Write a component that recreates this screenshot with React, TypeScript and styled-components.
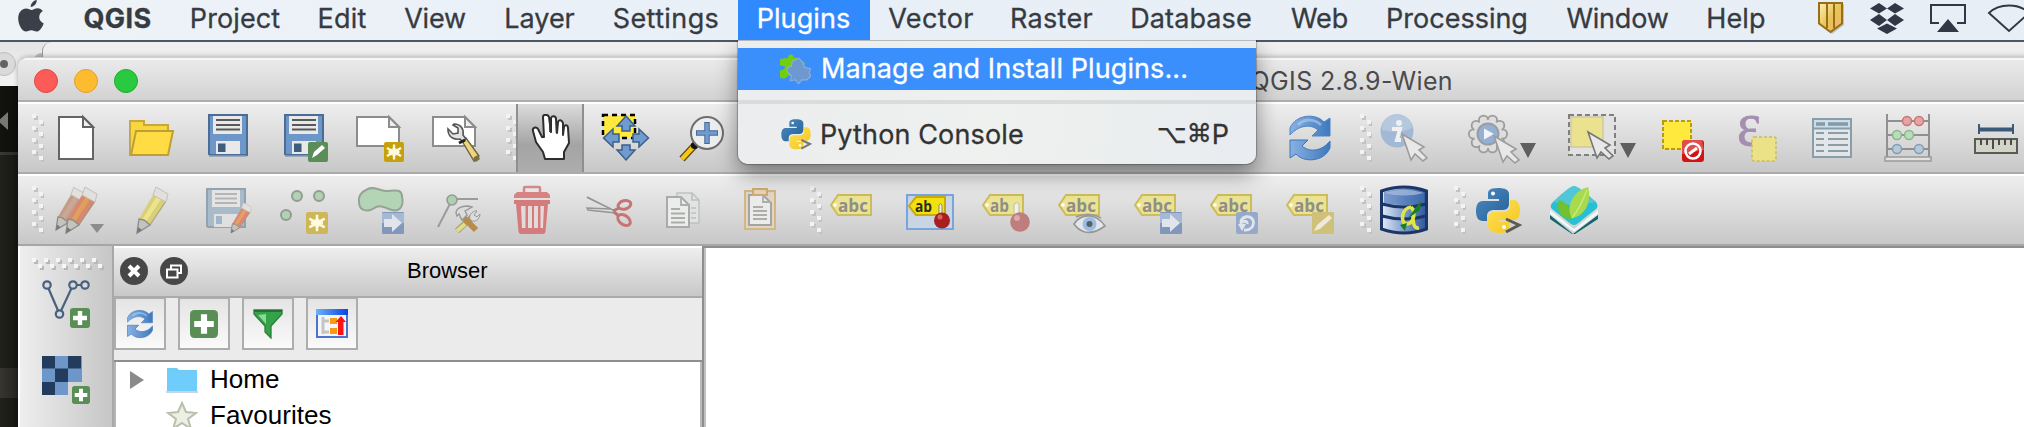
import React from "react";
import styled, { createGlobalStyle } from "styled-components";

const GlobalStyle = createGlobalStyle`
  body { margin: 0; }
  *, *::before, *::after { box-sizing: border-box; }
`;

const UI = `Inter, "Helvetica Neue", sans-serif`;
const HELV = `"Liberation Sans", Helvetica, sans-serif`;

/* ---------- desktop ---------- */

const Desktop = styled.div`
  position: relative;
  width: 2024px;
  height: 427px;
  overflow: hidden;
  background: #1c1d18;
  font-family: ${UI};
`;

const BackTitle = styled.div`
  position: absolute;
  left: 0;
  top: 42px;
  width: 60px;
  height: 44px;
  background: linear-gradient(#e4e4e4, #f2f2f2);
`;

const BackWindow = styled.div`
  position: absolute;
  left: 42px;
  top: 42px;
  width: 1990px;
  height: 40px;
  border-left: 1px solid #9a9a9a;
  border-radius: 9px 0 0 0;
  background: linear-gradient(#f0f0f0, #e3e3e3);
`;

const EditorStrip = styled.div`
  position: absolute;
  left: 0;
  top: 86px;
  width: 18px;
  height: 341px;
  background: linear-gradient(90deg, transparent, rgba(0, 0, 0, 0.3)),
    linear-gradient(#12120e 0 66px, #3a3a36 66px 69px, #20211b 69px 282px, #36352e 282px 312px, #20211b 312px);
`;

const StripArt = styled.svg`
  position: absolute;
  left: 0;
  top: 42px;
  width: 42px;
  height: 100px;
`;

/* ---------- menu bar ---------- */

const MenuBar = styled.div`
  position: relative;
  z-index: 2;
  display: flex;
  height: 42px;
  border-bottom: 2px solid #4b5867;
  background: linear-gradient(90deg, #eef3f7, #e8eff7 40%, #e8eef6);
`;

const AppleSlot = styled.div`
  width: 64px;
  padding-left: 18px;
`;

const MenuTitle = styled.div<{ $w: number; $ls: number; $bold?: boolean; $open?: boolean }>`
  width: ${(p) => p.$w}px;
  height: 40px;
  line-height: 37px;
  padding-right: 1px;
  display: flex;
  justify-content: center;
  font-size: 27px;
  white-space: nowrap;
  letter-spacing: ${(p) => p.$ls}px;
  font-weight: ${(p) => (p.$bold ? 700 : 400)};
  -webkit-text-stroke: 0.3px currentColor;
  color: ${(p) => (p.$open ? "#fff" : "#363b42")};
  background: ${(p) => (p.$open ? "#3089fd" : "transparent")};
`;

const StatusItems = styled.div`
  display: flex;
  margin-left: auto;
  height: 40px;
`;

const menus: { label: string; w: number; ls: number; bold?: boolean; open?: boolean }[] = [
  { label: "QGIS", w: 108, ls: 0.4, bold: true },
  { label: "Project", w: 127, ls: 0.1 },
  { label: "Edit", w: 87, ls: 0.2 },
  { label: "View", w: 99, ls: -0.2 },
  { label: "Layer", w: 110, ls: 0 },
  { label: "Settings", w: 143, ls: 0.4 },
  { label: "Plugins", w: 132, ls: 0.1, open: true },
  { label: "Vector", w: 123, ls: 0.4 },
  { label: "Raster", w: 118, ls: 0.3 },
  { label: "Database", w: 161, ls: 0.1 },
  { label: "Web", w: 96, ls: -0.1 },
  { label: "Processing", w: 179, ls: 0 },
  { label: "Window", w: 142, ls: -0.2 },
  { label: "Help", w: 95, ls: 0.2 },
];

/* ---------- dropdown ---------- */

const Dropdown = styled.div`
  position: absolute;
  z-index: 3;
  left: 738px;
  top: 40px;
  width: 518px;
  height: 124px;
  padding-top: 7px;
  border-top: 1px solid #b4b9be;
  border-radius: 0 0 10px 10px;
  background: linear-gradient(100deg, #ecedee, #eef1ee 50%, #e9ecf0);
  box-shadow: 0 0 1px 1px rgba(0, 0, 0, 0.25), 0 10px 22px rgba(0, 0, 0, 0.42);
  clip-path: inset(0 -60px -60px -60px);
`;

const MenuItem = styled.div<{ $active?: boolean; $ls: number }>`
  display: flex;
  align-items: center;
  height: ${(p) => (p.$active ? 42 : 60)}px;
  padding: 0 27px ${(p) => (p.$active ? 2 : 0)}px 42px;
  font-size: 27px;
  letter-spacing: ${(p) => p.$ls}px;
  white-space: nowrap;
  -webkit-text-stroke: 0.3px currentColor;
  color: ${(p) => (p.$active ? "#fff" : "#333")};
  background: ${(p) => (p.$active ? "#3a8ffc" : "transparent")};
  svg { margin-right: ${(p) => (p.$active ? 10 : 8)}px; flex: none; }
`;

const Divider = styled.div`
  height: 4px;
  margin-top: 10px;
  background: #dadbdc;
`;

const Shortcut = styled.span`
  display: flex;
  align-items: center;
  margin-left: auto;
  letter-spacing: 0;
`;

const KeySymbol = styled.span<{ $size: number }>`
  font-family: "DejaVu Sans", sans-serif;
  font-size: ${(p) => p.$size}px;
  line-height: 30px;
  letter-spacing: 0;
`;

/* ---------- window ---------- */

const Window = styled.div`
  position: absolute;
  left: 18px;
  top: 57px;
  width: 2006px;
  height: 370px;
  display: flex;
  flex-direction: column;
  border-radius: 10px 0 0 0;
  overflow: hidden;
  background: #fff;
  border-top: 1px solid #cfcfcf;
`;

const WindowShadow = styled.div`
  position: absolute;
  left: 18px;
  top: 57px;
  width: 2020px;
  height: 380px;
  border-radius: 10px 0 0 0;
  box-shadow: 0 0 5px rgba(0, 0, 0, 0.3);
`;

const TitleBar = styled.div`
  display: flex;
  align-items: center;
  height: 44px;
  flex: none;
  padding: 2px 571px 0 16px;
  border-top: 2px solid #f7f7f7;
  border-bottom: 2px solid #adadad;
  background: linear-gradient(#eaeaea, #d2d2d2);
`;

const Light = styled.span<{ $fill: string; $ring: string }>`
  width: 24px;
  height: 24px;
  margin-right: 16px;
  border-radius: 50%;
  border: 1.5px solid ${(p) => p.$ring};
  background: ${(p) => p.$fill};
`;

const TitleText = styled.span`
  margin-left: auto;
  font-size: 25px;
  letter-spacing: 0.35px;
  color: #4a4a4c;
`;

const Toolbar = styled.div<{ $last?: boolean }>`
  display: flex;
  align-items: center;
  flex: none;
  height: 72px;
  padding-left: 14px;
  border-top: 2px solid #fff;
  border-bottom: 2px solid ${(p) => (p.$last ? "#a6a6a6" : "#ababab")};
  background: linear-gradient(#eeeeee, #c8c8c8);
`;

const Tool = styled.div<{ $ml?: number }>`
  width: 48px;
  height: 48px;
  flex: none;
  margin-left: ${(p) => p.$ml ?? 28}px;
  svg { display: block; overflow: visible; }
`;

const PressedTool = styled.div`
  display: flex;
  align-items: center;
  justify-content: center;
  width: 68px;
  height: 68px;
  flex: none;
  margin-left: -2px;
  border: solid #8f8f8f;
  border-width: 0 2px;
  background: linear-gradient(#dcdcdc, #a4a4a4 60%, #adadad);
`;

const Grip = styled.svg<{ $ml?: number }>`
  display: block;
  flex: none;
  margin-left: ${(p) => p.$ml ?? 0}px;
`;

const Caret = styled.span<{ $ml: number; $mr: number; $dim?: boolean; $w: number }>`
  flex: none;
  align-self: flex-end;
  margin: 0 ${(p) => p.$mr}px ${(p) => (p.$dim ? 11 : 14)}px ${(p) => p.$ml}px;
  border: solid transparent;
  border-width: ${(p) => (p.$dim ? 9 : 15)}px ${(p) => p.$w / 2}px 0;
  border-top-color: ${(p) => (p.$dim ? "#8c8c8c" : "#5e5e5e")};
`;

const Body = styled.div`
  display: flex;
  flex: 1;
`;

const SideBar = styled.div`
  width: 96px;
  padding: 12px 0 0 12px;
  border-left: 2px solid #fff;
  border-right: 2px solid #a8a8a8;
  background: linear-gradient(90deg, #eeeeee, #c6c6c6);
`;

const SideTool = styled.div<{ $mt: number }>`
  width: 48px;
  height: 48px;
  margin: ${(p) => p.$mt}px 0 0 10px;
  svg { display: block; overflow: visible; }
`;

const BrowserPanel = styled.div`
  display: flex;
  flex-direction: column;
  width: 588px;
  border-top: 2px solid #fff;
`;

const PanelHeader = styled.div`
  display: flex;
  align-items: center;
  height: 50px;
  flex: none;
  padding: 0 0 3px 6px;
  border-bottom: 2px solid #ababab;
  background: linear-gradient(#eeeeee, #c8c8c8);
  svg { margin-right: 12px; }
`;

const PanelTitle = styled.span`
  font: 22px/26px ${HELV};
  color: #000;
  margin-left: 207px;
`;

const PanelButtons = styled.div`
  display: flex;
  gap: 12px;
  height: 64px;
  flex: none;
  border-bottom: 2px solid #8e8e8e;
  background: #ebebeb;
`;

const PanelButton = styled.div`
  display: flex;
  align-items: center;
  justify-content: center;
  width: 52px;
  height: 52px;
  border: 2px solid #adadad;
  border-top-width: 1px;
  background: linear-gradient(#e4e4e4, #fafafa);
`;

const Tree = styled.div`
  flex: 1;
  overflow: hidden;
  border-left: 2px solid #b5b5b5;
  border-right: 2px solid #b9b9b9;
  background: #fff;
`;

const TreeRow = styled.div`
  display: flex;
  align-items: center;
  height: 36px;
  padding-left: 14px;
  font: 26px/34px ${HELV};
  color: #000;
`;

const TreeLabel = styled.span`
  height: 36px;
`;

const Disclosure = styled.span<{ $shown?: boolean }>`
  width: 14px;
  margin-right: 22px;
  border: solid transparent;
  border-width: 9px 0 9px 14px;
  border-left-color: ${(p) => (p.$shown ? "#8a8a8a" : "transparent")};
`;

const TreeIcon = styled.svg`
  margin-right: 12px;
  flex: none;
`;

const Canvas = styled.div`
  flex: 1;
  border-top: 2px solid #8e8e8e;
  border-left: 2px solid #8e8e8e;
  background: #fff;
  box-shadow: inset 2px 0 #c0c0c0;
`;

/* ---------- icons ---------- */

const Svg = ({ children, size = 48, box = 48, opacity }: { children: React.ReactNode; size?: number; box?: number; opacity?: number }) => (
  <svg width={size} height={size} viewBox={`0 0 ${box} ${box}`} opacity={opacity}>{children}</svg>
);

const gripDots = [0, 1, 2, 3].flatMap((i) => [[0, i * 12], [7, i * 12 + 6]]);
const ToolbarGrip = ({ ml }: { ml?: number }) => (
  <Grip $ml={ml} width="12" height="48">
    {gripDots.map(([x, y]) => (
      <g key={`${x}-${y}`}>
        <rect x={x + 2} y={y + 2} width="4" height="4" fill="#c2c2c2" />
        <rect x={x} y={y} width="4" height="4" fill="#f3f3f3" />
      </g>
    ))}
  </Grip>
);

const SideGrip = () => (
  <Grip width="76" height="14">
    {Array.from({ length: 12 }, (_, i) => {
      const y = i % 2 ? 6 : 0;
      return (
        <g key={i}>
          <rect x={i * 6 + 2} y={y + 2} width="4" height="4" fill="#b8b8b8" />
          <rect x={i * 6} y={y} width="4" height="4" fill="#f6f6f6" />
        </g>
      );
    })}
  </Grip>
);

const Apple = () => (
  <svg width="26" height="32" viewBox="0 0 26 32" fill="#3b4048">
    <path d="M18.700 0c.3 3.300-2.700 6.900-6 6.900C12.400 3.700 15.500.4 18.700 0Z" />
    <path d="M24.800 11.100c-5.400 3.500-4.400 10.200.9 12.300-1.200 3.400-4 8.100-7 8.100-2.100 0-2.900-1.300-5.400-1.300s-3.400 1.300-5.300 1.300C4.400 31.500.2 25 .2 18.200c0-6 3.800-9.800 8-9.800 2.400 0 3.800 1.500 5.500 1.500 1.600 0 3.300-1.700 6.100-1.700 1.800 0 3.900 1 5 2.900Z" />
  </svg>
);

const Tray = () => (
  <svg width="207" height="40" viewBox="0 0 207 40">
    <defs>
      <linearGradient id="gold" x1="0" y1="0" x2="1" y2="1">
        <stop offset="0" stopColor="#fdf0b8" /><stop offset=".5" stopColor="#e8c455" /><stop offset="1" stopColor="#f0b476" />
      </linearGradient>
    </defs>
    <path d="M3 4H27V25L15 34L3 25Z" fill="#00000030" />
    <path d="M2 3H25V23.500L13.500 32L2 23.500Z" fill="url(#gold)" stroke="#996f16" strokeWidth="2" />
    <path d="M10 3V28M17 3V28" stroke="#996f16" strokeWidth="2" />
    <g fill="#2f3844">
      <path d="M62 3L70 8.500L62 13.500L53 8.500ZM78 3L87 8.500L78 13.500L70 8.500ZM62 14L70 20L62 26L53 20ZM78 14L87 20L78 26L70 20ZM70 23.500L80 28.500L70 34L60 28.500Z" />
      <path d="M131 19L142 32H120Z" />
    </g>
    <path d="M122 23H114V5H148V23H140" fill="none" stroke="#2f3844" strokeWidth="2" />
    <path d="M172 13C182 3 202 3 212 13L192 31Z" fill="none" stroke="#2f3844" strokeWidth="2" />
  </svg>
);

const Spark = ({ x, y, s = 20, fill = "#c6a10b" }: { x: number; y: number; s?: number; fill?: string }) => (
  <g transform={`translate(${x} ${y}) scale(${s / 20})`}>
    <rect width="20" height="20" rx="2" fill={fill} />
    <path d="M10 2.500V17.500M3 6L17 14M17 6L3 14M4.500 10H15.500" stroke="#fffbe0" strokeWidth="2.300" />
    <circle cx="10" cy="10" r="4" fill="#fffbe0" opacity=".75" />
  </g>
);

const PlusBadge = ({ x, y, s }: { x: number; y: number; s: number }) => (
  <g transform={`translate(${x} ${y}) scale(${s / 20})`}>
    <rect width="20" height="20" rx="3" fill="#598e55" />
    <path d="M10 3V17M3 10H17" stroke="#fff" strokeWidth="4.400" />
  </g>
);

const ArrowBadge = () => (
  <g>
    <rect x="26" y="26" width="22" height="22" rx="1" fill="#8197bc" />
    <path d="M26 27H48V37H26Z" fill="#a5b8d4" />
    <path d="M28 33H36V28L46 37L36 46V41H28Z" fill="#e0e5ec" />
  </g>
);

const Cursor = ({ x, y, stroke = "#8b8b8b" }: { x: number; y: number; stroke?: string }) => (
  <path transform={`translate(${x} ${y})`} d="M0 0L22 13L17 16L25 24L21 27L13 20L9 26Z" fill="#e8e8e8" stroke={stroke} strokeWidth="1.600" />
);

const NewPage = () => (
  <Svg>
    <path d="M7 3H31L41 13V45H7Z" fill="#fff" stroke="#646464" strokeWidth="2" />
    <path d="M31 3V13H41Z" fill="#eee" stroke="#646464" strokeWidth="2" />
  </Svg>
);

const OpenFolder = () => (
  <Svg>
    <path d="M2 41V7H16V11H40V17L34 41Z" fill="#f7d63e" stroke="#c8a83e" strokeWidth="2" />
    <path d="M8 17H45L40 41H3Z" fill="#ffdb44" stroke="#bd9f35" strokeWidth="2" />
  </Svg>
);

const DiskShape = () => (
  <>
    <path d="M5 1H43V41H6L5 40Z" fill="#6c97c8" stroke="#4b6d93" strokeWidth="2" />
    <rect x="9" y="2" width="29" height="18" fill="#e9e9e9" />
    <path d="M12 6H36M12 11H36M12 15.500H36" stroke="#595959" strokeWidth="2" />
    <rect x="12" y="27" width="24" height="13" fill="#e9e9e9" />
    <rect x="14" y="29.500" width="7.500" height="8.500" fill="#3e5c7d" />
    <path d="M5 42H43" stroke="#8a9db2" strokeWidth="1.500" />
  </>
);

const SaveAs = () => (
  <Svg>
    <DiskShape />
    <rect x="28" y="28" width="20" height="20" rx="2" fill="#5a8d58" />
    <path d="M32 44L34 38L42 31L45 34L37 41Z" fill="#fff" />
  </Svg>
);

const Landscape = () => (
  <>
    <path d="M1 3H33L43 13V32H1Z" fill="#fff" stroke="#8c8c8c" strokeWidth="2" />
    <path d="M33 3V13H43Z" fill="#eee" stroke="#8c8c8c" strokeWidth="2" />
  </>
);

const Wrench = () => (
  <Svg>
    <Landscape />
    <path d="M30 27L34 24L47 42L42 47Z" fill="#ecd67c" stroke="#6f6544" strokeWidth="1.400" />
    <path d="M42 43L46 41L48 45L44 48L41 46Z" fill="#7e6f45" />
    <path d="M16 17C17 24 23 26 28 25L31 28L34 25L31 21C32 15 29 10 22 10L21 11L26 14V19L21 20L16 15Z" fill="#e2e2e2" stroke="#555" strokeWidth="1.600" />
    <path d="M27 29L33 26" stroke="#222" strokeWidth="3" />
  </Svg>
);

const Hand = () => (
  <Svg>
    <path
      d="M19 45L17 38L10 28L7 17C6 14 10 12 12 15L16 23H18L17 3C17 0 22 0 23 3L25 18L25 4C26 1 30 2 30 5L31 19L32 8C33 5 36 6 37 9V21L38 13C39 10 42 11 42 14L43 29L38 38V45Z"
      fill="#fff" stroke="#2d2d2d" strokeWidth="2" strokeLinejoin="round"
    />
    <path d="M24 7V18M30.500 8V19M37 11V21" stroke="#333" strokeWidth="1.600" />
  </Svg>
);

const PanSelection = () => (
  <Svg>
    <rect x="1" y="1" width="32" height="23" fill="#ffe93d" stroke="#000" strokeWidth="2.500" strokeDasharray="5 4" />
    <g fill="#6f9bce" stroke="#3d5f8a" strokeWidth="1.500">
      <path d="M24 2L33 12H28V17H20V12H15Z" />
      <path d="M24 46L33 36H28V31H20V36H15Z" />
      <path d="M1.500 24L11 15V20H17V28H11V33Z" />
      <path d="M46.500 24L37 15V20H31V28H37V33Z" />
    </g>
  </Svg>
);

const ZoomIn = () => (
  <Svg>
    <path d="M17 31L4 45" stroke="#5b4b1c" strokeWidth="7" />
    <path d="M16 32L4 45" stroke="#f9c80e" strokeWidth="4.500" />
    <circle cx="16.500" cy="31.500" r="3.600" fill="#111" />
    <circle cx="29" cy="19" r="16" fill="#eceded" stroke="#6d6d6d" strokeWidth="2" />
    <path d="M29 8V30M18 19H40" stroke="#456a9a" strokeWidth="5.500" />
    <path d="M29 9V29M19 19H39" stroke="#6f9bce" strokeWidth="3.500" />
  </Svg>
);

const Refresh = ({ size }: { size?: number }) => (
  <Svg size={size}>
    <defs>
      <linearGradient id="rf" x1="0" x2="1"><stop offset="0" stopColor="#8ab1e2" /><stop offset="1" stopColor="#3d79bd" /></linearGradient>
    </defs>
    <path d="M4 21V14C10 0 30 -1 38 8L44 4V22H26L32 16C24 9 12 12 4 21Z" fill="url(#rf)" stroke="#4f83c2" />
    <path d="M44 27V34C38 48 18 49 10 40L4 44V26H22L16 32C24 39 36 37 44 27Z" fill="url(#rf)" stroke="#3f76b8" />
    <path d="M12 11C19 4 29 5 35 11" fill="none" stroke="#b4cdec" strokeWidth="3" opacity=".6" />
  </Svg>
);

const Identify = () => (
  <Svg>
    <circle cx="17" cy="17" r="16.500" fill="#a2b9d5" />
    <path d="M2 16A15 15 0 0 1 32 14Q20 20 2 16Z" fill="#b5c8dd" />
    <circle cx="19" cy="9" r="3" fill="#f0f0f0" />
    <path d="M12 15H20L17 26H21" fill="none" stroke="#f0f0f0" strokeWidth="4" />
    <Cursor x={22} y={20} stroke="#9c9c9c" />
  </Svg>
);

const Action = () => (
  <Svg>
    {Array.from({ length: 10 }, (_, i) => {
      const a = (i * Math.PI) / 5;
      return <circle key={i} cx={20 + 14.500 * Math.cos(a)} cy={20 + 14.500 * Math.sin(a)} r="4.600" fill="#dedede" stroke="#9c9c9c" strokeWidth="1.800" />;
    })}
    <circle cx="20" cy="20" r="14" fill="#dedede" />
    <circle cx="20" cy="20" r="10.500" fill="#93b1d5" stroke="#9a9da0" strokeWidth="2" />
    <path d="M16 14.500L26 20L16 25.500Z" fill="#f3f3f3" />
    <Cursor x={26} y={22} stroke="#9c9c9c" />
  </Svg>
);

const SelectArea = () => (
  <Svg>
    <rect x="1" y="1" width="46" height="40" fill="#e2e2e2" stroke="#7f7f7f" strokeWidth="2" strokeDasharray="5 3" />
    <rect x="3" y="3" width="32" height="30" fill="#ebe290" stroke="#cfc9a2" strokeWidth="1.500" />
    <Cursor x={20} y={18} stroke="#777" />
  </Svg>
);

const Deselect = () => (
  <Svg>
    <rect x="3" y="7" width="28" height="28" fill="#ffe93d" stroke="#b89a13" strokeWidth="2" strokeDasharray="4 2" />
    <rect x="22" y="26" width="22" height="22" rx="3" fill="#d01414" />
    <path d="M24 26H42L44 36L22 40V28Z" fill="#e35b5b" opacity=".8" />
    <circle cx="33" cy="37" r="7.500" fill="none" stroke="#fff" strokeWidth="2.500" />
    <path d="M29 40L37 34" stroke="#fff" strokeWidth="3" />
  </Svg>
);

const Expression = () => (
  <Svg>
    <text x="1" y="31" fontFamily="Liberation Serif, serif" fontSize="62" fill="#a48fb0" stroke="#a48fb0" strokeWidth=".8" textLength="24" lengthAdjust="spacingAndGlyphs">ε</text>
    <rect x="16" y="23" width="24" height="24" rx="2" fill="#ebe187" stroke="#c9bc5e" strokeWidth="1.500" strokeDasharray="3 2" />
  </Svg>
);

const Table = () => (
  <Svg>
    <rect x="5" y="5" width="38" height="38" fill="#e3e6e8" stroke="#8a9dab" strokeWidth="2" />
    <rect x="6" y="6" width="36" height="8" fill="#cbdde8" />
    <path d="M5 14.500H43" stroke="#8a9dab" strokeWidth="2" />
    <path d="M8 10H17M20 10H40" stroke="#8499a8" strokeWidth="3.500" />
    <path d="M8 19H16M20 19H40M8 25H16M20 25H40M8 31H16M20 31H40M8 37H16M20 37H40" stroke="#8e9ca6" strokeWidth="2" />
  </Svg>
);

const Abacus = () => {
  const bead = (x: number, y: number, f: string, s: string) => <circle key={`${x}${y}`} cx={x} cy={y} r="4.500" fill={f} stroke={s} strokeWidth="1.500" />;
  return (
    <Svg>
      <path d="M3 0V43M45 0V43M3 7H45M3 21H45M3 35H45" stroke="#909090" strokeWidth="2" />
      <path d="M1 43H47V47H1Z" fill="#e2e2e2" stroke="#9a9a9a" strokeWidth="1.500" />
      {bead(23, 7, "#e5a3a3", "#c77676")}{bead(35, 7, "#e5a3a3", "#c77676")}
      {bead(13, 21, "#b9dcb9", "#8db48d")}{bead(25, 21, "#b9dcb9", "#8db48d")}
      {bead(13, 35, "#b4c9dc", "#859cb0")}{bead(35, 35, "#b4c9dc", "#859cb0")}
    </Svg>
  );
};

const Ruler = () => (
  <Svg>
    <path d="M7 10V20M41 10V20" stroke="#3a5a78" strokeWidth="2" />
    <path d="M7 15.500H41" stroke="#3a5a78" strokeWidth="4" />
    <rect x="3" y="25" width="42" height="14" fill="#d2d4c8" stroke="#595b55" strokeWidth="2" />
    <path d="M9 25V31M15 25V31M21 25V35M27 25V31M33 25V31M39 25V31" stroke="#4b4b4b" strokeWidth="2" />
  </Svg>
);

const Pencil = ({ x, y, body, light, k = 1 }: { x: number; y: number; body: string; light: string; k?: number }) => (
  <g transform={`translate(${x} ${y}) scale(${k})`}>
    <path d="M0 0L2 -14L16 -38L29 -31L13 -8Z" fill={body} />
    <path d="M5 -13L20 -37L24 -34L9 -11Z" fill={light} />
    <path d="M13 -8L29 -32" stroke="#9b8d84" strokeWidth="1.200" opacity=".7" />
    <path d="M0 0L2 -14L7 -13L13 -8Z" fill="#c6c2bc" stroke="#8d8d8d" strokeWidth="1.400" />
    <path d="M0 0L1 -6L5 -3Z" fill="#777" />
    <path d="M16 -38L19 -46L31 -39L29 -31Z" fill="#e2dfdd" stroke="#c2bfbd" />
  </g>
);

const Pencils = () => (
  <Svg>
    <Pencil x={4} y={44} body="#c39c8a" light="#cba896" k={0.93} />
    <Pencil x={14} y={47} body="#d58a70" light="#e09f5c" />
  </Svg>
);

const EditPencil = () => (
  <Svg><Pencil x={9} y={47} body="#d9cf78" light="#ebe48c" /></Svg>
);

const SaveEdits = () => (
  <Svg>
    <g transform="translate(-2 2)">
      <path d="M5 1H43V39H6L5 38Z" fill="#a9bac8" stroke="#92a3b0" strokeWidth="2" />
      <rect x="10" y="2" width="28" height="17" fill="#e4e4e4" />
      <path d="M13 6H35M13 10.500H35M13 15H35" stroke="#b5b5b5" strokeWidth="1.800" />
      <rect x="12" y="26" width="24" height="13" fill="#e0e0e0" />
      <rect x="14" y="28" width="6" height="8" fill="#9fb6cc" />
    </g>
    <Pencil x={27} y={47} body="#da8a72" light="#e3a068" k={0.66} />
  </Svg>
);

const AddPoints = () => (
  <Svg>
    {[[17, 10], [39, 10], [6, 29]].map(([x, y]) => <circle key={x} cx={x} cy={y} r="5" fill="#b0d2b1" stroke="#939c93" strokeWidth="2" />)}
    <Spark x={26} y={26} s={22} fill="#cdb758" />
  </Svg>
);

const MoveFeature = () => (
  <Svg>
    <path d="M10 4C16 -1 25 5 30 5C37 5 45 2 46 10C48 20 44 26 36 24C30 23 26 18 20 21C12 27 3 25 3 16C2 11 5 6 10 4Z" fill="#b4d5b5" stroke="#96a296" strokeWidth="2" />
    <ArrowBadge />
  </Svg>
);

const NodeTool = () => (
  <Svg>
    <path d="M20 13H46M20 14L6 41" stroke="#9b9b9b" strokeWidth="2" />
    <circle cx="20" cy="14" r="5" fill="#afd0b0" stroke="#929c93" strokeWidth="1.600" />
    <path d="M25 45L40 31" stroke="#a3a171" strokeWidth="6" /><path d="M25 45L33 38" stroke="#e0dc88" strokeWidth="4" />
    <path d="M38 33C36 28 43 24 45 25L42 29L45 31L48 28C48 34 42 36 40 35Z" fill="#ddd" stroke="#999" />
    <path d="M30 30L44 44" stroke="#b98b4b" strokeWidth="6" />
    <path d="M25 30C22 24 27 20 36 20L40 21L33 25L35 29L30 34L27 28Z" fill="#dcdcdc" stroke="#999" strokeWidth="1.400" />
  </Svg>
);

const Trash = () => (
  <Svg>
    <path d="M16 7V2Q16 1 17 1H31Q32 1 32 2V7" fill="none" stroke="#d68787" strokeWidth="2.500" />
    <path d="M9 6H39L42 9V12H6V9Z" fill="#d88383" />
    <path d="M6 14H42V18H40L37.500 46Q37 48 35 48H13Q11 48 10.500 46L8 18H6Z" fill="#d47c7c" />
    <path d="M13 20H17.500V42H14ZM20 20H24V42H20ZM26 20H30V42H26ZM32.500 20H36L35 42H32.500Z" fill="#e4dada" />
  </Svg>
);

const Scissors = () => (
  <Svg>
    <path d="M3 11L29 24L32 27L4 24L3 22L27 23L4 12Z" fill="#ddd" stroke="#959595" strokeWidth="1.500" />
    <ellipse cx="40.500" cy="19" rx="6.500" ry="4.200" transform="rotate(-15 40 19)" fill="none" stroke="#c77474" strokeWidth="3" />
    <ellipse cx="40" cy="34" rx="7" ry="4.500" transform="rotate(35 40 34)" fill="none" stroke="#c77474" strokeWidth="3" />
    <path d="M29 25L35 22M30 26L35 30" stroke="#bb7777" strokeWidth="3" />
  </Svg>
);

const Copy = () => (
  <Svg>
    <path d="M17 7H32L39 14V37H17Z" fill="#e1e3e2" stroke="#bfc0c0" strokeWidth="1.500" />
    <path d="M32 7V14H39M31 22H36M31 27H36M31 32H36" fill="none" stroke="#bfc0c0" strokeWidth="1.700" />
    <path d="M7 11H21L29 19V41H7Z" fill="#ebedeb" stroke="#a9aaaa" strokeWidth="2" />
    <path d="M21 11V19H29M11 23H20M11 27.500H25M11 32H25M11 36.500H25" fill="none" stroke="#abacac" strokeWidth="1.800" />
  </Svg>
);

const Paste = () => (
  <Svg>
    <rect x="9" y="5" width="30" height="38" fill="#e4d5c2" stroke="#d3b686" strokeWidth="2" />
    <path d="M13 9H27L35 17V39H13Z" fill="#ebecea" stroke="#a3a4a4" strokeWidth="2" />
    <path d="M27 10V16H35M17 21H27M17 25H31M17 29H31M17 33H31" fill="none" stroke="#adadad" strokeWidth="1.800" />
    <rect x="17" y="3" width="14" height="6" fill="#e6d5bb" stroke="#cfac72" strokeWidth="2" />
  </Svg>
);

const Tag = ({ text = "abc" }: { text?: string }) => (
  <>
    <path d="M1 19L8 9H41V29H8Z" fill="#ebe394" stroke="#cdbd58" strokeWidth="2" />
    <circle cx="5" cy="19" r="1.800" fill="#fff" />
    <text x="8" y="25.500" fontFamily="Open Sans, sans-serif" fontWeight="700" fontSize="17.500" fill="#8f8f85" textLength={text === "abc" ? 30 : 19} lengthAdjust="spacingAndGlyphs">{text}</text>
  </>
);

const Pinned = () => (
  <Svg>
    <rect x="1" y="9" width="46" height="34" fill="#cad5e4" stroke="#79a5de" strokeWidth="2" />
    <path d="M3 20L10 11H39V29H10Z" fill="#f3e011" stroke="#c9aa07" strokeWidth="2" />
    <text x="9" y="25.500" fontFamily="Open Sans, sans-serif" fontWeight="700" fontSize="16" fill="#2e2c12" textLength="17" lengthAdjust="spacingAndGlyphs">ab</text>
    <path d="M33 30V19Q34 16 36 19V30" fill="#eee" stroke="#8d8d6a" />
    <circle cx="36" cy="34.500" r="8" fill="#a81f1f" /><circle cx="34" cy="31" r="2.500" fill="#da6565" />
  </Svg>
);

const PinLabel = () => (
  <Svg>
    <Tag text="ab" />
    <path d="M32 28V18Q35 15 37 18V28" fill="#f0f0ea" stroke="#c0bca0" />
    <circle cx="38" cy="36" r="9.800" fill="#c07d7d" /><circle cx="35" cy="32" r="3" fill="#dda9a9" />
  </Svg>
);

const ShowLabel = () => (
  <Svg>
    <Tag />
    <path d="M16 38Q22 29 32 30Q41 31 47 40Q36 48 27 46Q20 44 16 38Z" fill="#e3e6ea" stroke="#969696" strokeWidth="1.700" />
    <path d="M18 31Q30 25 43 32" fill="none" stroke="#999" strokeWidth="1.600" />
    <circle cx="31.500" cy="38" r="7" fill="#9cbce0" /><circle cx="31.500" cy="38" r="3" fill="#56616c" />
  </Svg>
);

const MoveLabel = () => <Svg><Tag /><ArrowBadge /></Svg>;

const RotateLabel = () => (
  <Svg>
    <Tag />
    <rect x="26" y="26" width="22" height="22" rx="2" fill="#96a9c9" />
    <path d="M34 44C40 45 45 40 43 34C40 29 33 30 31 35V40M37 38C38 35 34 34 33 37" fill="none" stroke="#dfe5ed" strokeWidth="2.800" />
    <path d="M28 38H36L32 45Z" fill="#dfe5ed" />
  </Svg>
);

const ChangeLabel = () => (
  <Svg>
    <Tag />
    <rect x="26" y="26" width="22" height="22" rx="1" fill="#cfc07a" />
    <path d="M28 45L31 39L43 29L46 32L34 43Z" fill="#eeeadb" />
  </Svg>
);

const Database = () => (
  <Svg>
    <defs>
      <linearGradient id="db" x1="0" x2="1">
        <stop offset="0" stopColor="#e3ebf7" /><stop offset=".5" stopColor="#7c9ccd" /><stop offset="1" stopColor="#2f5599" />
      </linearGradient>
    </defs>
    <path d="M1.500 5Q24 -3 46.500 5V43Q24 51 1.500 43Z" fill="url(#db)" stroke="#1b3566" strokeWidth="3" />
    <path d="M4 6Q24 0 44 6V17Q24 21 4 17Z" fill="#4470b4" opacity=".6" />
    <path d="M4 7Q24 0 44 7Q24 12 4 7Z" fill="#a9bfe0" opacity=".7" />
    <path d="M2 18Q24 24 46 18M2 30Q24 36 46 30" fill="none" stroke="#1b3566" strokeWidth="3" />
    <path d="M31 21C21 22 20 38 27 38C34 37 36 26 31 21M34 24C32 34 33 43 39 42" fill="none" stroke="#dfe546" strokeWidth="3.600" />
    <path d="M20 39L27 37L25 45ZM27 33L41 15L40 24Z" fill="#16811f" />
  </Svg>
);

const PythonMark = ({ size, dim }: { size?: number; dim?: boolean }) => (
  <Svg size={size}>
    <defs>
      <linearGradient id="pb" x1="0" y1="0" x2="1" y2="1"><stop offset="0" stopColor="#4b8cc4" /><stop offset="1" stopColor="#265f94" /></linearGradient>
      <linearGradient id="py" x1="0" y1="0" x2="1" y2="1"><stop offset="0" stopColor="#ffe159" /><stop offset="1" stopColor="#f3c51d" /></linearGradient>
    </defs>
    <path d="M24 2C15 2 14 5 14 8V13H25V15H9C4 15 2 19 2 25C2 31 4 35 9 35H13V30C13 26 16 24 20 24H29C33 24 35 21 35 18V8C35 4 31 2 24 2Z" fill="url(#pb)" />
    <circle cx="19" cy="7.500" r="2" fill="#fff" />
    <path d="M36 14V20C36 24 33 26 29 26H20C16 26 14 29 14 32V40C14 44 18 47 25 47C31 47 35 45 35 41V36H25V34H40C44 34 46 30 46 24C46 18 43 14 40 14Z" fill="url(#py)" />
    <circle cx="30" cy="41" r="2" fill="#fff" />
    <path d="M32 33L45 39L32 46" fill="none" stroke={dim ? "#777" : "#5b5b52"} strokeWidth="3" />
  </Svg>
);

const Leaf = () => (
  <Svg>
    <path d="M0 29L23 48L48 29V33L25 48H22L0 33Z" fill="#13656d" />
    <path d="M0 24L24 43L48 24V28L24 46L0 28Z" fill="#eefafa" />
    <path d="M3 16Q20 0 24 0T46 16Q49 20 46 23L27 38Q24 40 21 38L2 23Q-1 20 3 16Z" fill="#27bfd2" />
    <path d="M3 16Q20 0 24 0T46 16L24 20Z" fill="#62cbd8" opacity=".7" />
    <path d="M9 14C6 24 10 33 21 33C23 24 17 16 9 14Z" fill="#72c02d" />
    <path d="M38 1C23 5 15 21 22 32C35 30 42 16 38 1Z" fill="#a7da4e" />
    <path d="M37 4Q30 22 22 32" fill="none" stroke="#c5ec74" strokeWidth="1.500" />
  </Svg>
);

const Puzzle = () => (
  <Svg size={31} box={30}>
    <path d="M0 6L4 5L8 5C7 1 13 0 13 4L17 5L16 10L24 9L23 14L12 22L7 22Q6 26 0 24V17Q5 16 5 13L0 12Z" fill="#71cf10" />
    <path d="M12 8L18 5L22 9L24 14L30 15L28 19L30 22L26 26L21 26L18 30L15 26L10 27L11 22L7 18L7 14L11 13Z" fill="#6d98d0" stroke="#8fb0dc" />
  </Svg>
);

const VectorLayer = () => (
  <Svg>
    <path d="M5 5L17.500 34L31 5H43" fill="none" stroke="#48617d" strokeWidth="2.200" />
    {[[5, 5], [17.500, 34], [31, 5], [43, 5]].map(([x, y]) => <circle key={x} cx={x} cy={y} r="3.700" fill="#d6dade" stroke="#48617d" strokeWidth="2.200" />)}
    <PlusBadge x={28} y={28} s={20} />
  </Svg>
);

const RasterLayer = () => (
  <Svg>
    <rect width="40" height="26" fill="#6c97c8" /><rect y="26" width="26" height="13" fill="#6c97c8" />
    <path d="M0 0H13V12.500H0ZM26 0H39V12.500H26ZM13 12.500H26V26H13ZM0 26H13V39H0Z" fill="#233c5d" />
    <PlusBadge x={30} y={30} s={18} />
  </Svg>
);

const CloseDot = () => (
  <Svg size={28} box={28}>
    <circle cx="14" cy="14" r="14" fill="#474747" />
    <path d="M9 9L19 19M19 9L9 19" stroke="#fff" strokeWidth="4" />
  </Svg>
);

const FloatDot = () => (
  <Svg size={28} box={28}>
    <circle cx="14" cy="14" r="14" fill="#474747" />
    <path d="M11 12V8.500H21V16H18M7 12.500H17.500V20.500H7Z" fill="none" stroke="#fff" strokeWidth="2" />
  </Svg>
);

const Funnel = () => (
  <Svg size={30} box={30}>
    <path d="M1 1H29V5L18 17V29L12 23V17L1 5Z" fill="#35a24a" stroke="#2c7d3c" strokeWidth="1.300" />
    <path d="M5 6L13 15V5Z" fill="#86dc91" />
    <path d="M1 2H29" stroke="#276f35" strokeWidth="2" />
  </Svg>
);

const Collapse = () => (
  <Svg size={32} box={32}>
    <defs><linearGradient id="cw" x1="0" x2="1"><stop offset="0" stopColor="#6cb2f8" /><stop offset="1" stopColor="#0b43e5" /></linearGradient></defs>
    <rect x="1" y="2" width="30" height="27" fill="#f4f6fd" stroke="#4c74cf" strokeWidth="2" />
    <rect x="0" y="1" width="32" height="6" fill="url(#cw)" />
    <path d="M7 9V26M7 13H13M7 24H13" stroke="#c9c4bd" strokeWidth="3" />
    <path d="M14 10H21V16H14ZM14 20H21V26H14Z" fill="#f99a14" />
    <path d="M25 8L30 14H27.500V27H22V14H19.500Z" fill="#fa1414" />
  </Svg>
);

const FolderIcon = () => (
  <TreeIcon width="32" height="26" viewBox="0 0 32 26">
    <path d="M1 1H11L13 3H31V24H1Z" fill="#70cbf5" />
    <path d="M1 6H31V24H1Z" fill="#6fcdfb" />
    <path d="M0 25H32" stroke="#c6d6de" strokeWidth="2" />
  </TreeIcon>
);

const StarIcon = () => (
  <TreeIcon width="32" height="30" viewBox="0 0 32 30">
    <path d="M16 2L20 11L30 12L22 18L25 28L16 22L7 28L10 18L2 12L12 11Z" fill="#ecefe4" stroke="#b9bfaa" strokeWidth="2" />
  </TreeIcon>
);

/* ---------- app ---------- */

export default function App() {
  return (
    <Desktop>
      <GlobalStyle />
      <BackTitle />
      <BackWindow />
      <EditorStrip />
      <StripArt viewBox="0 0 42 100">
        <circle cx="4" cy="22" r="11.500" fill="#dadada" stroke="#bdbdbd" />
        <circle cx="4" cy="22" r="4" fill="#626262" />
        <path d="M8 70V88L-2 79Z" fill="#777" />
        <path d="M34 16Q37 11 42 11V16Z" fill="#b8b8b8" />
      </StripArt>
      <WindowShadow />

      <Window>
        <TitleBar>
          <Light $fill="#fc5b57" $ring="#e2463f" />
          <Light $fill="#fdbc2f" $ring="#e1a030" />
          <Light $fill="#29c940" $ring="#1bad2c" />
          <TitleText>QGIS 2.8.9-Wien</TitleText>
        </TitleBar>

        <Toolbar>
          <ToolbarGrip />
          <Tool $ml={8}><NewPage /></Tool>
          <Tool><OpenFolder /></Tool>
          <Tool><Svg><DiskShape /></Svg></Tool>
          <Tool><SaveAs /></Tool>
          <Tool><Svg><Landscape /><Spark x={28} y={28} /></Svg></Tool>
          <Tool><Wrench /></Tool>
          <ToolbarGrip ml={26} />
          <PressedTool><Hand /></PressedTool>
          <Tool $ml={18}><PanSelection /></Tool>
          <Tool><ZoomIn /></Tool>
          <Tool $ml={560}><Refresh /></Tool>
          <ToolbarGrip ml={26} />
          <Tool $ml={8}><Identify /></Tool>
          <Tool $ml={40}><Action /></Tool>
          <Caret $ml={4} $mr={0} $w={16} />
          <Tool $ml={32}><SelectArea /></Tool>
          <Caret $ml={4} $mr={0} $w={16} />
          <Tool $ml={24}><Deselect /></Tool>
          <Tool><Expression /></Tool>
          <Tool $ml={24}><Table /></Tool>
          <Tool><Abacus /></Tool>
          <Tool $ml={40}><Ruler /></Tool>
        </Toolbar>

        <Toolbar $last>
          <ToolbarGrip />
          <Tool $ml={8}><Pencils /></Tool>
          <Caret $ml={-10} $mr={0} $dim $w={14} />
          <Tool $ml={24}><EditPencil /></Tool>
          <Tool><SaveEdits /></Tool>
          <Tool><AddPoints /></Tool>
          <Tool><MoveFeature /></Tool>
          <Tool><NodeTool /></Tool>
          <Tool><Trash /></Tool>
          <Tool><Scissors /></Tool>
          <Tool><Copy /></Tool>
          <Tool><Paste /></Tool>
          <ToolbarGrip ml={26} />
          <Tool $ml={8}><Svg><Tag /></Svg></Tool>
          <Tool><Pinned /></Tool>
          <Tool><PinLabel /></Tool>
          <Tool><ShowLabel /></Tool>
          <Tool><MoveLabel /></Tool>
          <Tool><RotateLabel /></Tool>
          <Tool><ChangeLabel /></Tool>
          <ToolbarGrip ml={26} />
          <Tool $ml={8}><Database /></Tool>
          <ToolbarGrip ml={26} />
          <Tool $ml={8}><PythonMark /></Tool>
          <Tool><Leaf /></Tool>
        </Toolbar>

        <Body>
          <SideBar>
            <SideGrip />
            <SideTool $mt={8}><VectorLayer /></SideTool>
            <SideTool $mt={28}><RasterLayer /></SideTool>
          </SideBar>
          <BrowserPanel>
            <PanelHeader>
              <CloseDot />
              <FloatDot />
              <PanelTitle>Browser</PanelTitle>
            </PanelHeader>
            <PanelButtons>
              <PanelButton><Refresh size={30} /></PanelButton>
              <PanelButton><Svg size={28} box={20}><PlusBadge x={0} y={0} s={20} /></Svg></PanelButton>
              <PanelButton><Funnel /></PanelButton>
              <PanelButton><Collapse /></PanelButton>
            </PanelButtons>
            <Tree>
              <TreeRow><Disclosure $shown /><FolderIcon /><TreeLabel>Home</TreeLabel></TreeRow>
              <TreeRow><Disclosure /><StarIcon /><TreeLabel>Favourites</TreeLabel></TreeRow>
            </Tree>
          </BrowserPanel>
          <Canvas />
        </Body>
      </Window>

      <MenuBar>
        <AppleSlot><Apple /></AppleSlot>
        {menus.map((m) => (
          <MenuTitle key={m.label} $w={m.w} $ls={m.ls} $bold={m.bold} $open={m.open}>{m.label}</MenuTitle>
        ))}
        <StatusItems><Tray /></StatusItems>
      </MenuBar>

      <Dropdown>
        <MenuItem $active $ls={0.09}><Puzzle />Manage and Install Plugins...</MenuItem>
        <Divider />
        <MenuItem $ls={0.13}>
          <PythonMark size={32} dim />Python Console
          <Shortcut><KeySymbol $size={26}>⌥</KeySymbol><KeySymbol $size={25}>⌘</KeySymbol>P</Shortcut>
        </MenuItem>
      </Dropdown>
    </Desktop>
  );
}
